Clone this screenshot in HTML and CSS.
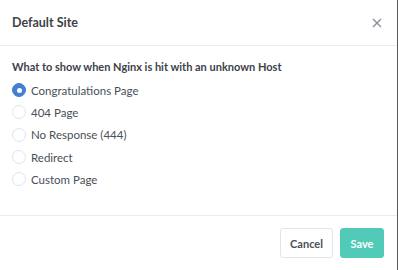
FILE: index.html
```html
<!DOCTYPE html>
<html lang="en">
<head>
    <meta charset="UTF-8">
    <meta name="viewport" content="width=device-width, initial-scale=1.0">
    <title>Default Site</title>
    <link rel="stylesheet" href="styles.css">
</head>
<body>
    <section class="modal">
        <div class="modal-header">
            <h5 class="modal-title">Default Site</h5>
            <button class="close" aria-label="Close">
                <svg width="10" height="10" viewBox="0 0 10 10">
                    <path d="M1 1 L9 9 M9 1 L1 9" stroke="#8a8f99" stroke-width="1.4" fill="none"/>
                </svg>
            </button>
        </div>
        <div class="modal-body">
            <div class="form-label">What to show when Nginx is hit with an unknown Host</div>
            <label class="radio">
                <span class="radio-mark checked"></span>
                <span class="radio-text">Congratulations Page</span>
            </label>
            <label class="radio">
                <span class="radio-mark"></span>
                <span class="radio-text">404 Page</span>
            </label>
            <label class="radio">
                <span class="radio-mark"></span>
                <span class="radio-text">No Response (444)</span>
            </label>
            <label class="radio">
                <span class="radio-mark"></span>
                <span class="radio-text">Redirect</span>
            </label>
            <label class="radio">
                <span class="radio-mark"></span>
                <span class="radio-text">Custom Page</span>
            </label>
        </div>
        <div class="modal-footer">
            <button class="btn btn-secondary">Cancel</button>
            <button class="btn btn-teal">Save</button>
        </div>
    </section>
</body>
</html>
```

FILE: styles.css
```css
* {
    margin: 0;
    padding: 0;
    box-sizing: border-box;
    font-family: Lato, "Liberation Sans", sans-serif;
}
body {
    background: #fff;
    width: 398px;
    height: 270px;
    overflow: hidden;
}
.modal {
    width: 398px;
    height: 270px;
    background: #fff;
    border-right: 1px solid #5a5a5a;
    display: flex;
    flex-direction: column;
}
.modal-header {
    height: 46px;
    display: flex;
    align-items: center;
    justify-content: space-between;
    padding: 0 14px 0 12px;
    border-bottom: 1px solid #e9ecef;
}
.modal-title {
    font-size: 12.5px;
    font-weight: 700;
    color: #3d4249;
}
.close {
    border: none;
    background: none;
    width: 12px;
    height: 12px;
    display: flex;
    align-items: center;
    justify-content: center;
}
.modal-body {
    height: 170px;
    padding: 13px 12px 0;
    border-bottom: 1px solid #e9ecef;
}
.form-label {
    font-size: 11px;
    line-height: 16px;
    font-weight: 700;
    color: #3d4249;
    margin-bottom: 4px;
}
.radio {
    display: flex;
    align-items: center;
    height: 22.3px;
    gap: 5px;
}
.radio-mark {
    width: 14px;
    height: 14px;
    border-radius: 50%;
    border: 1px solid #e0e5ec;
    background: #fff;
    flex-shrink: 0;
}
.radio-mark.checked {
    border-color: #467fcf;
    background: #467fcf;
    position: relative;
}
.radio-mark.checked::after {
    content: "";
    position: absolute;
    left: 3.5px;
    top: 3.5px;
    width: 5px;
    height: 5px;
    border-radius: 50%;
    background: #fff;
}
.radio-text {
    font-size: 11.5px;
    color: #495057;
}
.modal-footer {
    flex: 1;
    display: flex;
    justify-content: flex-end;
    align-items: center;
    gap: 7px;
    padding: 0 13px 0 0;
}
.btn {
    height: 30px;
    font-size: 11px;
    font-weight: 700;
    border-radius: 3px;
    cursor: pointer;
}
.btn-secondary {
    width: 53px;
    background: #fff;
    border: 1px solid #e0e5ec;
    color: #495057;
}
.btn-teal {
    width: 44px;
    background: #51cbb8;
    border: 1px solid #51cbb8;
    color: #fff;
}
```
